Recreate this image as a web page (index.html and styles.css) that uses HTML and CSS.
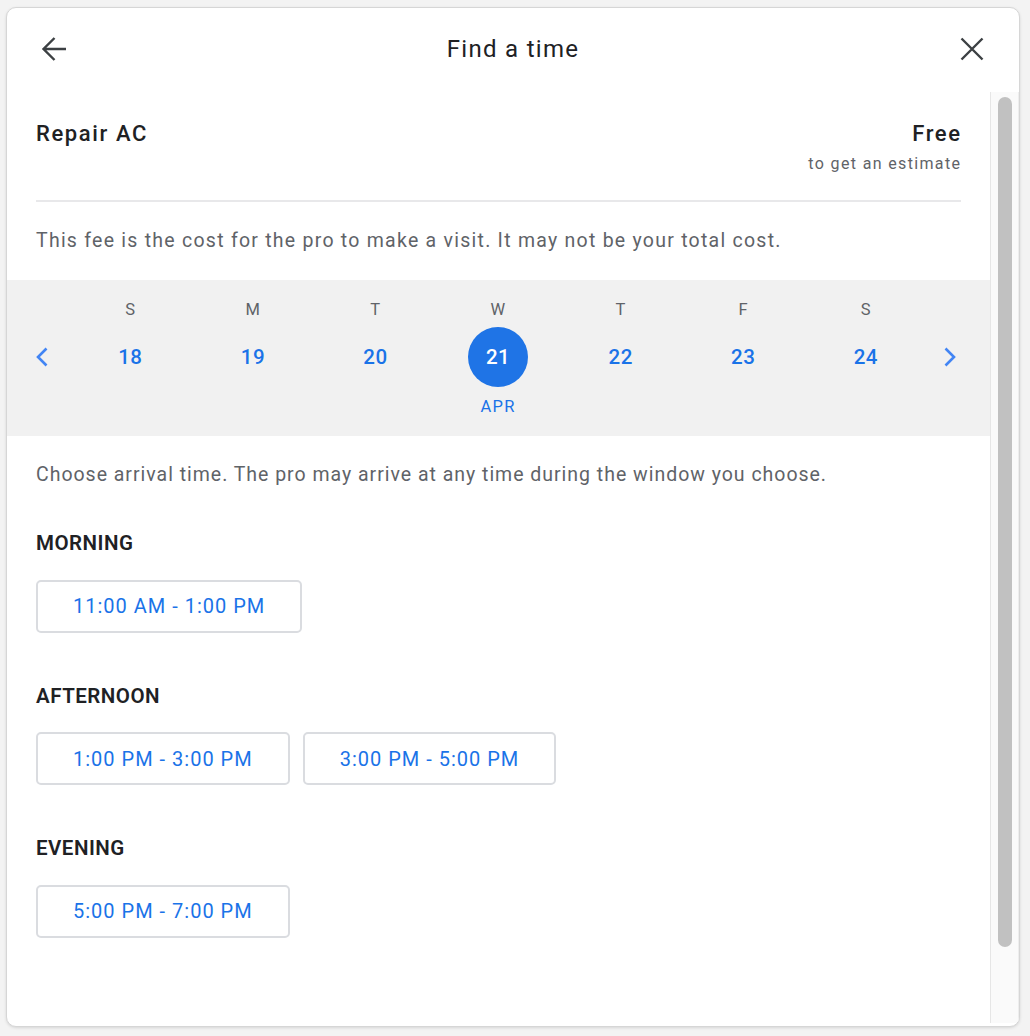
FILE: index.html
```html
<!DOCTYPE html>
<html>
<head>
<meta charset="utf-8">
<link rel="stylesheet" href="styles.css">
</head>
<body>
<div class="dialog">
  <header class="head">
    <button class="icon-btn" aria-label="Back">
      <svg width="26" height="26" viewBox="0 0 26 26"><path d="M2.5 13H25M13.5 2L2.5 13L13.5 24" fill="none" stroke="#3c4043" stroke-width="2.4"/></svg>
    </button>
    <h1 class="title">Find a time</h1>
    <button class="icon-btn" aria-label="Close">
      <svg width="24" height="24" viewBox="0 0 24 24"><path d="M1.5 1.5L22.5 22.5M22.5 1.5L1.5 22.5" fill="none" stroke="#3c4043" stroke-width="2.4"/></svg>
    </button>
  </header>
  <div class="body">
    <main class="content">
      <section class="summary">
        <div class="service">Repair AC</div>
        <div class="price">
          <div class="price-main">Free</div>
          <div class="price-sub">to get an estimate</div>
        </div>
      </section>
      <p class="note fee">This fee is the cost for the pro to make a visit. It may not be your total cost.</p>
      <section class="calendar">
        <button class="nav prev" aria-label="Previous week">
          <svg width="14" height="20" viewBox="0 0 14 20"><path d="M11.5 1.5L3 10L11.5 18.5" fill="none" stroke="#4285f4" stroke-width="2.6"/></svg>
        </button>
        <div class="day"><span class="dow">S</span><span class="num">18</span></div>
        <div class="day"><span class="dow">M</span><span class="num">19</span></div>
        <div class="day"><span class="dow">T</span><span class="num">20</span></div>
        <div class="day selected"><span class="dow">W</span><span class="num">21</span><span class="month">APR</span></div>
        <div class="day"><span class="dow">T</span><span class="num">22</span></div>
        <div class="day"><span class="dow">F</span><span class="num">23</span></div>
        <div class="day"><span class="dow">S</span><span class="num">24</span></div>
        <button class="nav next" aria-label="Next week">
          <svg width="14" height="20" viewBox="0 0 14 20"><path d="M2.5 1.5L11 10L2.5 18.5" fill="none" stroke="#4285f4" stroke-width="2.6"/></svg>
        </button>
      </section>
      <p class="note choose">Choose arrival time. The pro may arrive at any time during the window you choose.</p>
      <section class="slot-group">
        <h2 class="period">MORNING</h2>
        <div class="slots">
          <button class="slot">11:00 AM - 1:00 PM</button>
        </div>
      </section>
      <section class="slot-group">
        <h2 class="period">AFTERNOON</h2>
        <div class="slots">
          <button class="slot">1:00 PM - 3:00 PM</button>
          <button class="slot">3:00 PM - 5:00 PM</button>
        </div>
      </section>
      <section class="slot-group">
        <h2 class="period">EVENING</h2>
        <div class="slots">
          <button class="slot">5:00 PM - 7:00 PM</button>
        </div>
      </section>
    </main>
    <div class="scrollbar"><div class="thumb"></div></div>
  </div>
</div>
</body>
</html>
```
FILE: styles.css
```css
* { box-sizing: border-box; }
html, body { margin: 0; height: 100%; }
body {
  background: #f3f3f3;
  padding: 7px 10px 9px 6px;
  font-family: Roboto, "Noto Sans", Arial, sans-serif;
  color: #202124;
}
.dialog {
  height: 1020px;
  width: 1014px;
  background: #fff;
  border: 1px solid #d6d6d6;
  border-radius: 10px;
  box-shadow: 0 1px 3px rgba(0,0,0,0.12);
  display: flex;
  flex-direction: column;
  overflow: hidden;
}
.head {
  height: 84px;
  flex: none;
  display: flex;
  align-items: center;
  justify-content: space-between;
  padding: 0 23px 2px 23px;
}
.icon-btn {
  width: 48px; height: 48px;
  border: 0; background: none; padding: 0;
  display: flex; align-items: center; justify-content: center;
}
.title {
  margin: 0;
  font-size: 24px;
  font-weight: 400;
  color: #202124;
  letter-spacing: 1.3px;
}
.body {
  flex: 1;
  display: flex;
  min-height: 0;
}
.content {
  flex: 1;
  min-width: 0;
}
.summary {
  display: flex;
  justify-content: space-between;
  margin: 0 29px 0 29px;
  padding: 27px 0 26px;
  border-bottom: 2px solid #e8e8ea;
}
.service, .price-main {
  font-size: 22px;
  font-weight: 500;
  line-height: 30px;
  color: #202124;
  letter-spacing: 1.6px;
}
.price { text-align: right; }
.price-main { margin-right: -0.6px; }
.price-sub {
  font-size: 16px;
  color: #5f6368;
  line-height: 20px;
  margin-top: 5px;
  letter-spacing: 1.35px;
  margin-right: -0.35px;
}
.note {
  margin: 0;
  padding: 0 29px;
  font-size: 19.5px;
  line-height: 24px;
  color: #5f6368;
  white-space: nowrap;
}
.fee { padding-top: 27px; padding-bottom: 27px; letter-spacing: 1.25px; }
.calendar {
  background: #f1f1f1;
  height: 156px;
  display: grid;
  grid-template-columns: 62px repeat(7, 122.6px) 1fr;
  align-items: start;
}
.nav {
  border: 0; background: none; padding: 0;
  margin-top: 67px;
  width: 14px; height: 20px;
  display: flex;
}
.prev { margin-left: 28px; }
.next { margin-left: 16px; }
.day {
  display: flex;
  flex-direction: column;
  align-items: center;
  padding-top: 19px;
}
.dow {
  font-size: 16.5px;
  line-height: 22px;
  color: #5f6368;
  letter-spacing: 0.5px;
}
.num {
  width: 60px; height: 60px;
  border-radius: 50%;
  display: flex; align-items: center; justify-content: center;
  font-size: 20.5px;
  font-weight: 500;
  color: #1a73e8;
  margin-top: 6px;
  letter-spacing: 0.5px;
}
.selected .num {
  background: #1f74e6;
  color: #fff;
}
.month {
  font-size: 16.5px;
  line-height: 20px;
  color: #1a73e8;
  margin-top: 10px;
  letter-spacing: 1.2px;
}
.choose { padding-top: 27px; letter-spacing: 0.98px; }
.slot-group { padding: 0 29px; }
.period {
  margin: 0;
  padding-top: 44px;
  font-size: 20.5px;
  font-weight: 600;
  line-height: 24px;
  letter-spacing: 0.5px;
  color: #202124;
}
.slots {
  display: flex;
  gap: 13px;
  margin-top: 24.5px;
  margin-bottom: 7px;
}
.slot {
  height: 53px;
  padding: 0 35px;
  border: 2px solid #dadce0;
  border-radius: 5px;
  background: #fff;
  font-family: Roboto, "Noto Sans", Arial, sans-serif;
  font-size: 20px;
  color: #1a73e8;
  letter-spacing: 1px;
}
.scrollbar {
  flex: none;
  width: 29px;
  background: #fafafa;
  border-left: 1px solid #e6e6e6;
  border-right: 1px solid #ededed;
  padding: 5px 6px 0 7px;
  margin-bottom: 3px;
}
.thumb {
  height: 850px;
  background: #c1c1c1;
  border-radius: 8px;
}
```
